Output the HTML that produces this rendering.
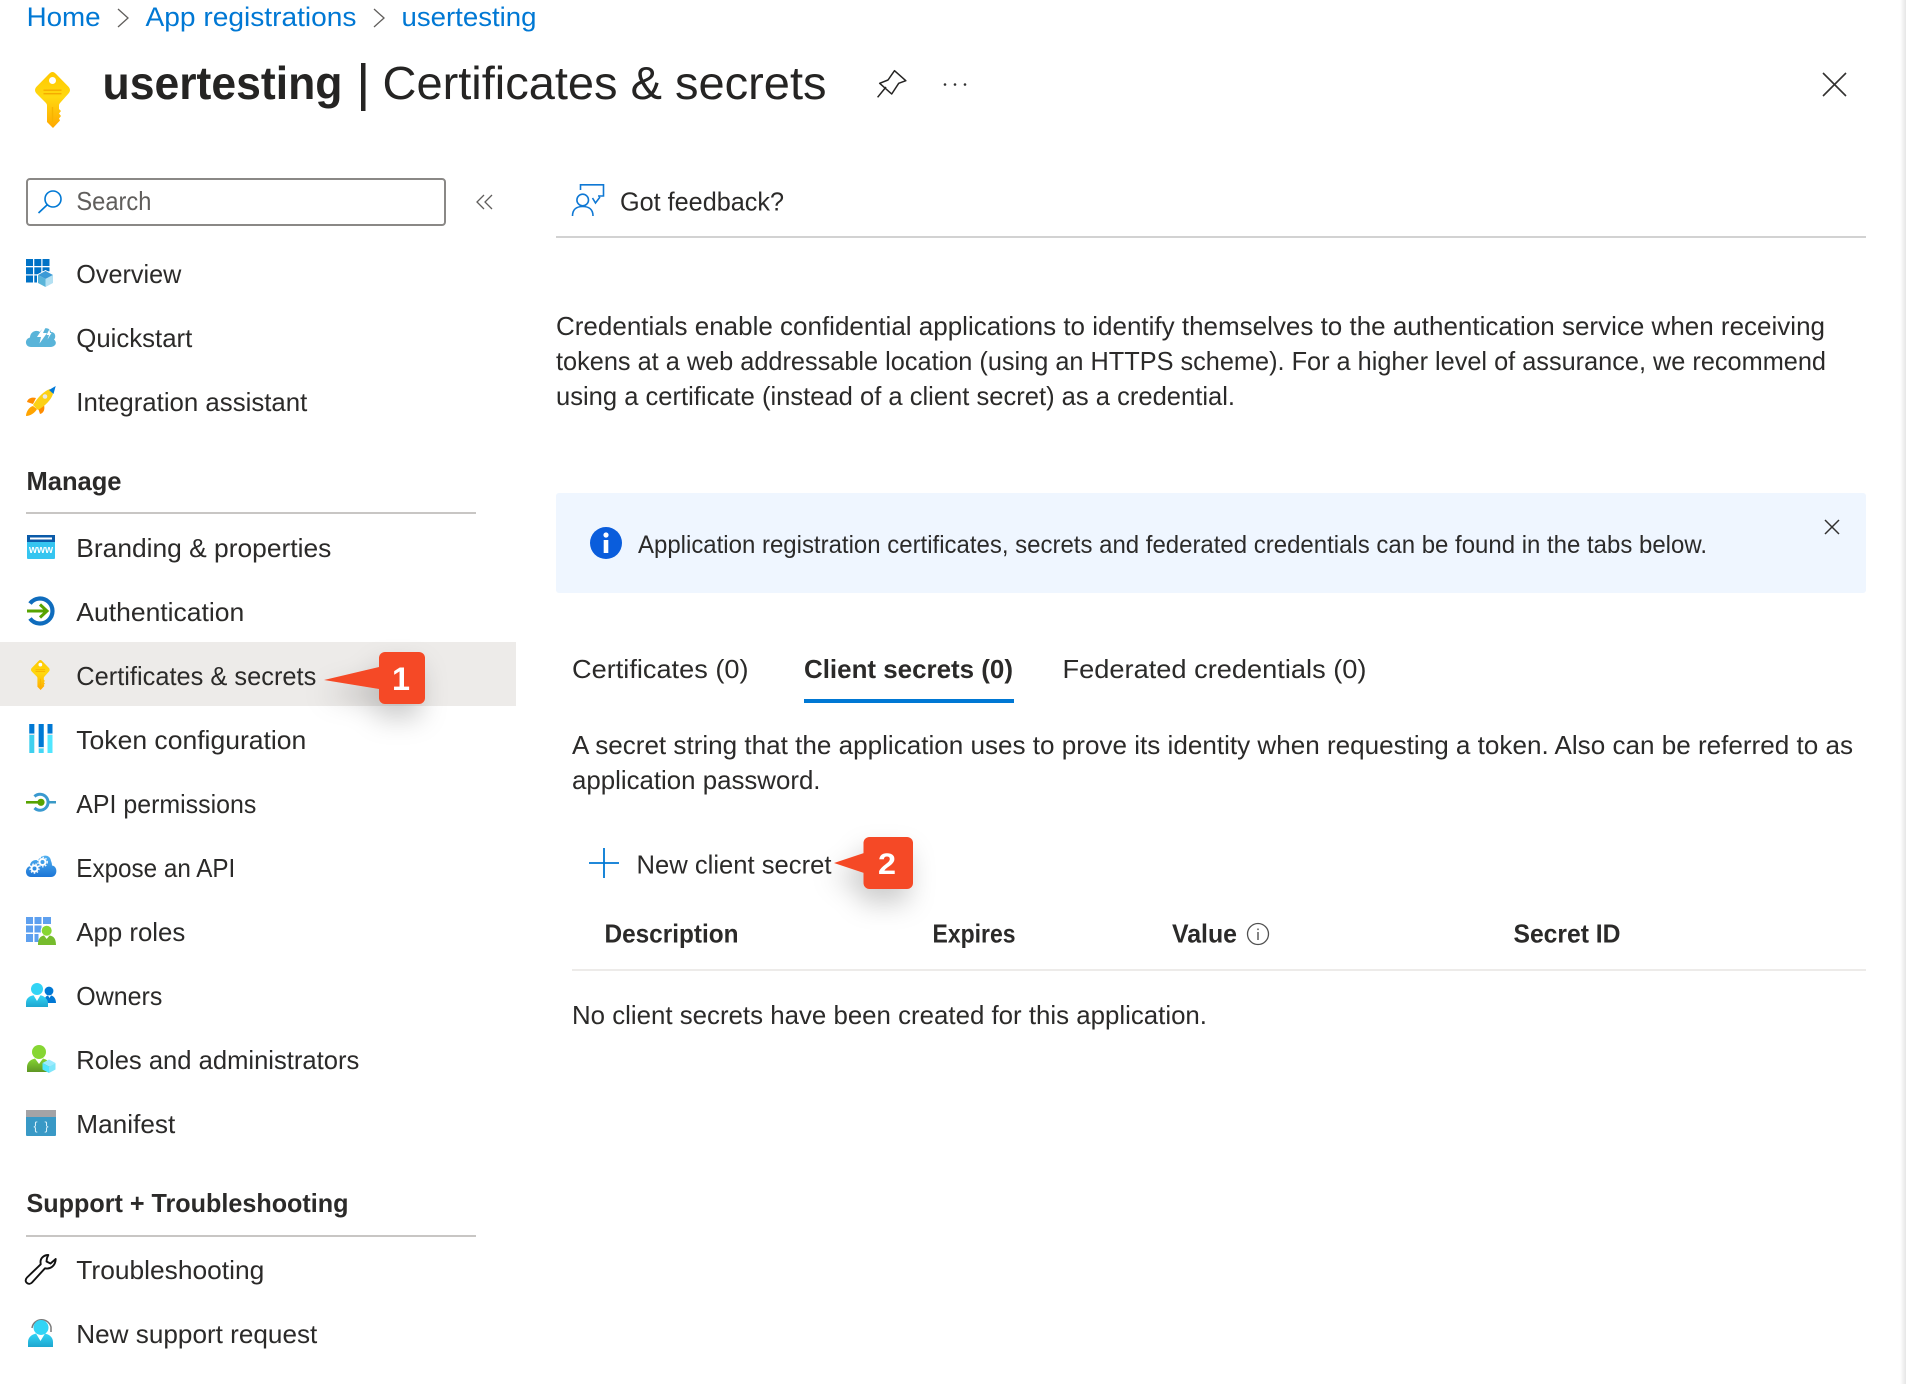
<!DOCTYPE html>
<html lang="en"><head><meta charset="utf-8"><title>usertesting | Certificates &amp; secrets</title>
<style>
html,body{margin:0;padding:0;background:#fff;width:1906px;height:1384px;overflow:hidden}
svg{display:block}
text{font-family:"Liberation Sans",sans-serif;font-size:26px;fill:#2b2a29}
.b{font-weight:700}
.l{fill:#0078d4}
</style></head><body>
<svg width="1906" height="1384" viewBox="0 0 1906 1384" xmlns="http://www.w3.org/2000/svg">
<defs>
<linearGradient id="gk" x1="0" y1="0" x2="0" y2="1"><stop offset="0" stop-color="#ffc800"/><stop offset=".45" stop-color="#ffd810"/><stop offset="1" stop-color="#ffa800"/></linearGradient>
<linearGradient id="gc" x1="0" y1="0" x2="0" y2="1"><stop offset="0" stop-color="#32d4f5"/><stop offset="1" stop-color="#1ea6cf"/></linearGradient>
<linearGradient id="gb" x1="0" y1="0" x2="0" y2="1"><stop offset="0" stop-color="#50b0f0"/><stop offset="1" stop-color="#1c75d6"/></linearGradient>
<linearGradient id="gg" x1="0" y1="0" x2="0" y2="1"><stop offset="0" stop-color="#86d633"/><stop offset="1" stop-color="#5e9624"/></linearGradient>
<linearGradient id="gs" x1="0" y1="0" x2="1" y2="0"><stop offset="0" stop-color="#fff"/><stop offset="1" stop-color="#e6e6e6"/></linearGradient>
<filter id="sh" x="-100%" y="-100%" width="300%" height="300%"><feDropShadow dx="-4" dy="14" stdDeviation="13" flood-color="#000" flood-opacity=".2"/></filter>
<symbol id="key" viewBox="0 0 35 56">
<path d="M17.5 0 C18.8 0 19.8 .8 20.8 1.8 L33.4 14.6 C35.5 16.8 35.5 19.4 33.4 21.6 L25.5 30.5 C24.6 31.5 24 32.3 24 33.5 L24 37 L26 39 L24 41.5 L26 44 L24 46.5 L25 48.5 L18 56 L12 50 L12 33.5 C12 32.3 11.4 31.5 10.5 30.5 L1.6 21.6 C-.5 19.4 -.5 16.8 1.6 14.6 L14.2 1.8 C15.2 .8 16.2 0 17.5 0Z" fill="url(#gk)"/>
<circle cx="17.5" cy="8.5" r="3.5" fill="#fff"/>
<rect x="8.5" y="17.5" width="18" height="1.4" fill="#f5ab00"/><rect x="8.5" y="21" width="18" height="1.4" fill="#f5ab00"/>
<rect x="16.8" y="35" width="1.4" height="15" fill="#f5b400"/>
</symbol>
</defs>

<rect x="1900" y="0" width="6" height="1384" fill="url(#gs)"/>

<!-- breadcrumb -->
<text class="l" x="26.6" y="26" textLength="74" lengthAdjust="spacingAndGlyphs" style="font-size:27px">Home</text>
<polyline points="118,9 128,18 118,27" fill="none" stroke="#605e5c" stroke-width="1.3"/>
<text class="l" x="145.5" y="26" textLength="211" lengthAdjust="spacingAndGlyphs" style="font-size:27px">App registrations</text>
<polyline points="374,9 384,18 374,27" fill="none" stroke="#605e5c" stroke-width="1.3"/>
<text class="l" x="401.5" y="26" textLength="135" lengthAdjust="spacingAndGlyphs" style="font-size:27px">usertesting</text>

<!-- title -->
<use href="#key" x="35" y="72" width="35" height="56"/>
<text class="b" x="102.5" y="99" textLength="240" lengthAdjust="spacingAndGlyphs" style="font-size:46px;fill:#252423">usertesting</text>
<rect x="361" y="63" width="4.5" height="48" fill="#252423"/>
<text x="382.5" y="99" textLength="444" lengthAdjust="spacingAndGlyphs" style="font-size:46px;fill:#252423">Certificates &amp; secrets</text>
<path d="M894.5,70.7 L905.8,80.7 L898.7,83.3 L891.7,94 L879.7,83.3 L888,80 Z M886,87 L877.6,97.3" fill="none" stroke="#252423" stroke-width="1.5" stroke-linejoin="round"/>
<circle cx="945" cy="84.5" r="1.3" fill="#333"/><circle cx="955" cy="84.5" r="1.3" fill="#333"/><circle cx="965" cy="84.5" r="1.3" fill="#333"/>
<path d="M1823,73 L1846,96 M1846,73 L1823,96" stroke="#323130" stroke-width="1.6" fill="none"/>

<!-- search -->
<rect x="27" y="179" width="418" height="46" rx="3" fill="#fff" stroke="#8a8886" stroke-width="2"/>
<circle cx="53" cy="199" r="8" fill="none" stroke="#0078d4" stroke-width="1.6"/>
<path d="M47,205 L38.5,213" stroke="#0078d4" stroke-width="1.6"/>
<text x="76.4" y="210" textLength="75" lengthAdjust="spacingAndGlyphs" style="fill:#605e5c">Search</text>
<path d="M484,195 L477,202 L484,209 M492,195 L485,202 L492,209" fill="none" stroke="#605e5c" stroke-width="1.3"/>

<!-- highlight -->
<rect x="0" y="642" width="516" height="64" fill="#edebe9"/>

<!-- nav text -->
<text x="76.3" y="283" textLength="105" lengthAdjust="spacingAndGlyphs">Overview</text>
<text x="76.3" y="347" textLength="116" lengthAdjust="spacingAndGlyphs">Quickstart</text>
<text x="76.3" y="411" textLength="231" lengthAdjust="spacingAndGlyphs">Integration assistant</text>
<text class="b" x="26.5" y="490" textLength="95" lengthAdjust="spacingAndGlyphs">Manage</text>
<rect x="26" y="512" width="450" height="2" fill="#c8c6c4"/>
<text x="76.3" y="557" textLength="255" lengthAdjust="spacingAndGlyphs">Branding &amp; properties</text>
<text x="76.3" y="621" textLength="168" lengthAdjust="spacingAndGlyphs">Authentication</text>
<text x="76.3" y="685" textLength="240" lengthAdjust="spacingAndGlyphs">Certificates &amp; secrets</text>
<text x="76.3" y="749" textLength="230" lengthAdjust="spacingAndGlyphs">Token configuration</text>
<text x="76.3" y="813" textLength="180" lengthAdjust="spacingAndGlyphs">API permissions</text>
<text x="76.3" y="877" textLength="159" lengthAdjust="spacingAndGlyphs">Expose an API</text>
<text x="76.3" y="941" textLength="109" lengthAdjust="spacingAndGlyphs">App roles</text>
<text x="76.3" y="1005" textLength="86" lengthAdjust="spacingAndGlyphs">Owners</text>
<text x="76.3" y="1069" textLength="283" lengthAdjust="spacingAndGlyphs">Roles and administrators</text>
<text x="76.3" y="1133" textLength="99" lengthAdjust="spacingAndGlyphs">Manifest</text>
<text class="b" x="26.5" y="1212" textLength="322" lengthAdjust="spacingAndGlyphs">Support + Troubleshooting</text>
<rect x="26" y="1235" width="450" height="2" fill="#c8c6c4"/>
<text x="76.3" y="1279" textLength="188" lengthAdjust="spacingAndGlyphs">Troubleshooting</text>
<text x="76.3" y="1343" textLength="241" lengthAdjust="spacingAndGlyphs">New support request</text>

<!-- Overview icon -->
<g fill="#0072c6">
<rect x="26" y="259" width="7" height="7"/><rect x="34.3" y="259" width="7" height="7"/><rect x="42.5" y="259" width="7" height="7"/>
<rect x="26" y="267.3" width="7" height="7"/><rect x="34.3" y="267.3" width="7" height="7"/><rect x="42.5" y="267.3" width="7" height="4"/>
<rect x="26" y="275.5" width="7" height="7"/><rect x="34.3" y="275.5" width="4" height="7"/>
</g>
<path d="M37,274.5 L45.5,270 L54,274.5 L54,283 L45.5,287.5 L37,283 Z" fill="#fff"/>
<path d="M38,275 L45.5,271 L53,275 L45.5,279 Z" fill="#3b9ad6"/>
<path d="M38,275 L45.5,279 L45.5,287 L38,283 Z" fill="#59b4d9"/>
<path d="M53,275 L45.5,279 L45.5,287 L53,283 Z" fill="#b3e0f2"/>

<!-- Quickstart -->
<path d="M31,347 C25,347 24,339 30,337.5 C30,332 36,329 40,332 C42,327 50,327 51,332 C56,332 56,338 54,339.5 C58,343 55,347 50,347 Z" fill="#59b4d9"/>
<path d="M44.5,325.5 L37,337 L41,337 L39.5,343.5 L47,333 L43,333 L46.5,325.5 Z" fill="#fff"/>
<path d="M49.5,329 L46.5,335 L49,335 L47.5,339.5 L51.5,333 L50,333 Z" fill="#fff"/>

<!-- Rocket -->
<path d="M36,398 C32,397 28,398 27,402 L33,404 Z" fill="#ff8c00"/>
<path d="M44,405 C45,409 44,413 40,414 L38,408 Z" fill="#ff8c00"/>
<path d="M33,406 C29,407 26,412 26,416 C30,416 35,413 37,409 Z" fill="#ffa400"/>
<path d="M50,389 C44,391 38,397 33,405 L38,410 C45,406 51,400 53,394 Z" fill="#fcd116"/>
<path d="M49,390 L55.7,386 L53.5,394 Z" fill="#0078d7"/>
<circle cx="45" cy="396.5" r="2.3" fill="#e8e8e8"/>

<!-- Branding -->
<rect x="27" y="535" width="28" height="24" rx="1" fill="#35c5f0"/>
<rect x="27" y="535" width="28" height="7" fill="#0a5aa8"/>
<rect x="30" y="537.5" width="22" height="2" fill="#fff"/>
<text x="29" y="553" textLength="24" lengthAdjust="spacingAndGlyphs" style="font-size:11px;font-weight:700;fill:#fff">www</text>

<!-- Auth -->
<path d="M30,603.5 A12.5,12.5 0 1 1 30,618.5" fill="none" stroke="#0f6cbd" stroke-width="4.2"/>
<path d="M27,611 L46,611 M40,604.5 L47,611 L40,617.5" fill="none" stroke="#57a300" stroke-width="3"/>

<!-- Key small -->
<use href="#key" x="31" y="660" width="18.7" height="30"/>

<!-- Token -->
<rect x="29.3" y="724" width="5" height="29" fill="#3fd0ee"/><rect x="29.3" y="724" width="5" height="9.5" fill="#0078d4"/><rect x="29.3" y="733.5" width="5" height="1.5" fill="#dfe8ee"/>
<rect x="38.7" y="724" width="5" height="29" fill="#44d6f5"/><rect x="38.7" y="724" width="5" height="23" fill="#0078d4"/><rect x="38.7" y="747" width="5" height="1.5" fill="#dfe8ee"/>
<rect x="47.5" y="724" width="5" height="29" fill="#50e6ff"/><rect x="47.5" y="724" width="5" height="9.5" fill="#0078d4"/><rect x="47.5" y="733.5" width="5" height="1.5" fill="#dfe8ee"/>

<!-- API -->
<path d="M34.5,796.5 A8,8 0 1 1 34.5,808" fill="none" stroke="#3a9ad0" stroke-width="3"/>
<rect x="48" y="801" width="8" height="2.5" fill="#3999c6"/>
<rect x="26" y="801" width="14" height="2.6" fill="#57a300"/>
<circle cx="41" cy="802.3" r="3.6" fill="#57a300"/>

<!-- Expose -->
<path d="M31,877 C25,877 24,868 30,866 C30,861 35,859 38,860.5 C40,855 50,853 51,861 C52,863 52,865 52,865.5 C58,866 58,877 51,877 Z" fill="url(#gb)"/>
<circle cx="34.5" cy="868.5" r="3" fill="none" stroke="#fff" stroke-width="2"/><circle cx="34.5" cy="868.5" r="4.6" fill="none" stroke="#fff" stroke-width="1.2" stroke-dasharray="1.6 1.6"/>
<circle cx="42.5" cy="862" r="3" fill="none" stroke="#fff" stroke-width="2"/><circle cx="42.5" cy="862" r="4.8" fill="none" stroke="#fff" stroke-width="1.2" stroke-dasharray="1.6 1.6"/>

<!-- App roles -->
<g fill="#5ea0ef">
<rect x="26" y="917" width="7" height="7"/><rect x="34.5" y="917" width="7" height="7"/><rect x="43" y="917" width="8" height="7"/>
<rect x="26" y="925.5" width="7" height="7"/><rect x="34.5" y="925.5" width="7" height="7"/>
<rect x="26" y="934" width="7" height="8"/><rect x="34.5" y="934" width="4" height="8"/>
</g>
<circle cx="46.7" cy="930.7" r="6" fill="#fff"/>
<circle cx="46.7" cy="930.7" r="5" fill="#86d633"/>
<path d="M38,945 C38,938 41,936 44,935.5 L46.7,939 L49.5,935.5 C53,936 56,938 56,945 Z" fill="#76bc2d"/>

<!-- Owners -->
<circle cx="49" cy="991" r="4.4" fill="#0078d4"/>
<path d="M44,1003 C44,998 46,996 48,995.5 L49.5,998 L51,995.5 C54,996 56,999 56,1003 Z" fill="#0078d4"/>
<circle cx="37" cy="989" r="6" fill="#32d4f5"/>
<path d="M26,1007 L26,1003 C26,998 30,996 33.5,995.3 L37,1001 L40.5,995.3 C44,996 48,999 48,1003 L48,1007 Z" fill="url(#gc)"/>

<!-- Roles -->
<circle cx="39" cy="1052" r="7" fill="#86d633"/>
<path d="M27,1072 L27,1067 C27,1062 31,1059.5 35,1058.5 L39,1064 L43,1058.5 C47,1059.5 50,1062 50,1067 L50,1072 Z" fill="url(#gg)"/>
<path d="M42.5,1063 L49,1059.5 L55.5,1063 L49,1066.5 Z" fill="#9cebff"/>
<path d="M42.5,1063 L49,1066.5 L49,1073 L42.5,1069.5 Z" fill="#50e6ff"/>
<path d="M55.5,1063 L49,1066.5 L49,1073 L55.5,1069.5 Z" fill="#7fe6fa"/>

<!-- Manifest -->
<rect x="26" y="1110" width="30" height="26" rx="1" fill="#3999c6"/>
<rect x="26" y="1110" width="30" height="7" fill="#a3a3a6"/>
<text x="33.5" y="1130" textLength="15" style="font-size:12px;fill:#dff3fb">{ }</text>

<!-- Wrench -->
<path d="M48.3,1255 C44,1255 40.5,1258 40.5,1262 L40.7,1264.3 L27,1277.5 C25,1279.5 25.5,1282 27,1283 C28.5,1284.3 30.5,1284 32,1282.5 L45,1268.3 C50,1269.5 55.5,1266 55.7,1259 L50.5,1263.5 L46.5,1261.5 L47,1258 Z" fill="none" stroke="#111" stroke-width="1.9" stroke-linejoin="round"/>

<!-- Support -->
<path d="M32,1328 A9.7,9.7 0 0 1 51,1327 L51,1332" fill="none" stroke="#7a7a7a" stroke-width="1.5"/>
<circle cx="41" cy="1327.5" r="7.5" fill="#32d4f5"/>
<path d="M28,1347 L28,1342 C28,1337 32,1334.5 36,1333.5 L40.5,1341 L45,1333.5 C49,1334.5 53,1337 53,1342 L53,1347 Z" fill="url(#gc)"/>

<!-- Badge 1 -->
<g filter="url(#sh)">
<path d="M324,680 L379,667 L379,689 Z" fill="#f54a26"/>
<rect x="379" y="652" width="46" height="52" rx="6" fill="#f54a26"/>
</g>
<text class="b" x="392" y="690" textLength="18" lengthAdjust="spacingAndGlyphs" style="font-size:32px;fill:#fff">1</text>

<!-- feedback -->
<circle cx="582.7" cy="200" r="5.8" fill="none" stroke="#0f78d4" stroke-width="1.6"/>
<path d="M572.5,216 C572.5,209 577,206.5 582.7,206.5 C588.5,206.5 593,209 593,216" fill="none" stroke="#0f78d4" stroke-width="1.6"/>
<path d="M580.5,190 L580.5,184.8 L603.5,184.8 L603.5,196 L598,196 M592.5,198 L595.5,203 L600,197" fill="none" stroke="#0f78d4" stroke-width="1.6"/>
<text x="620" y="210.5" textLength="164" lengthAdjust="spacingAndGlyphs">Got feedback?</text>
<rect x="556" y="236" width="1310" height="2" fill="#d2d2d2"/>

<!-- description -->
<text x="556" y="335" textLength="1269" lengthAdjust="spacingAndGlyphs">Credentials enable confidential applications to identify themselves to the authentication service when receiving</text>
<text x="556" y="370" textLength="1270" lengthAdjust="spacingAndGlyphs">tokens at a web addressable location (using an HTTPS scheme). For a higher level of assurance, we recommend</text>
<text x="556" y="405" textLength="679" lengthAdjust="spacingAndGlyphs">using a certificate (instead of a client secret) as a credential.</text>

<!-- info bar -->
<rect x="556" y="493" width="1310" height="100" rx="3" fill="#eff6ff"/>
<circle cx="606" cy="543" r="16" fill="#0a5ddc"/>
<circle cx="606" cy="535" r="2.6" fill="#fff"/>
<rect x="603.7" y="540" width="4.6" height="13" fill="#fff"/>
<text x="638" y="553" textLength="1069" lengthAdjust="spacingAndGlyphs" style="font-size:25px">Application registration certificates, secrets and federated credentials can be found in the tabs below.</text>
<path d="M1825,520 L1839,534 M1839,520 L1825,534" stroke="#323130" stroke-width="1.5" fill="none"/>

<!-- tabs -->
<text x="572" y="678" textLength="176.5" lengthAdjust="spacingAndGlyphs">Certificates (0)</text>
<text class="b" x="804" y="678" textLength="209" lengthAdjust="spacingAndGlyphs">Client secrets (0)</text>
<rect x="804" y="699" width="210" height="4" fill="#0078d4"/>
<text x="1062.5" y="678" textLength="304" lengthAdjust="spacingAndGlyphs">Federated credentials (0)</text>

<text x="572" y="754" textLength="1281" lengthAdjust="spacingAndGlyphs">A secret string that the application uses to prove its identity when requesting a token. Also can be referred to as</text>
<text x="572" y="789" textLength="248.5" lengthAdjust="spacingAndGlyphs">application password.</text>

<!-- new client secret -->
<path d="M589,863 L619,863 M604,848 L604,878" stroke="#0078d4" stroke-width="1.8" fill="none"/>
<text x="636.5" y="873.5" textLength="195" lengthAdjust="spacingAndGlyphs">New client secret</text>

<!-- Badge 2 -->
<g filter="url(#sh)">
<path d="M834,863 L864,853 L864,873 Z" fill="#f54a26"/>
<rect x="863.5" y="837" width="49.5" height="52" rx="6" fill="#f54a26"/>
</g>
<text class="b" x="878" y="874" textLength="18" lengthAdjust="spacingAndGlyphs" style="font-size:30px;fill:#fff">2</text>

<!-- table -->
<text class="b" x="604.5" y="942.5" textLength="134" lengthAdjust="spacingAndGlyphs">Description</text>
<text class="b" x="932.5" y="942.5" textLength="83" lengthAdjust="spacingAndGlyphs">Expires</text>
<text class="b" x="1172" y="942.5" textLength="65" lengthAdjust="spacingAndGlyphs">Value</text>
<circle cx="1258" cy="934" r="10.5" fill="none" stroke="#505050" stroke-width="1.3"/>
<rect x="1257.3" y="932" width="1.4" height="8" fill="#505050"/><rect x="1257.3" y="928.5" width="1.4" height="1.6" fill="#505050"/>
<text class="b" x="1513.5" y="942.5" textLength="107" lengthAdjust="spacingAndGlyphs">Secret ID</text>
<rect x="572" y="969" width="1294" height="2" fill="#edebe9"/>
<text x="572" y="1024" textLength="635" lengthAdjust="spacingAndGlyphs">No client secrets have been created for this application.</text>
</svg>
</body></html>
